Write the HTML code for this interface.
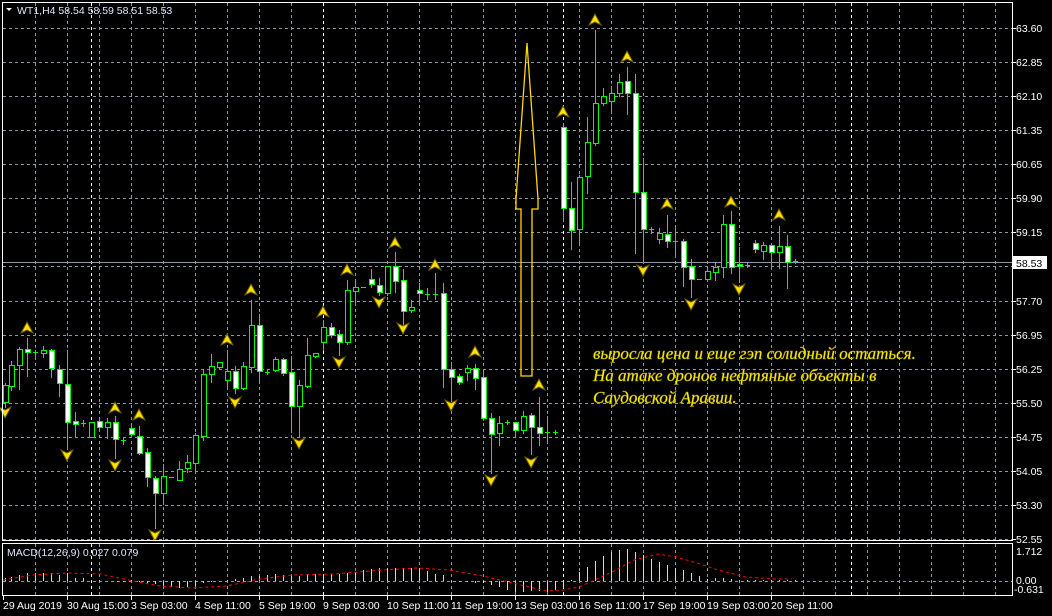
<!DOCTYPE html>
<html><head><meta charset="utf-8"><style>
html,body{margin:0;padding:0;background:#000;width:1052px;height:616px;overflow:hidden}
svg{display:block}
text{font-family:"Liberation Sans","DejaVu Sans",sans-serif;font-size:10.5px;fill:#fff}
.it{font-family:"Liberation Serif",serif;font-style:italic;font-size:17px;fill:#ffff00;stroke:#b8a000;stroke-width:0.5}
</style></head><body>
<svg id="s" width="1052" height="616" xmlns="http://www.w3.org/2000/svg">
<g id="grid"></g>
<line x1="2" y1="262.5" x2="1012" y2="262.5" stroke="#8c9aab" stroke-width="1"/>
<g id="cand"></g>
<polygon points="527,43 516,199 516,209 521,209 521,376 532,376 532,209 538,209 538,199" fill="none" stroke="#ffd800" stroke-width="1.3"/>
<g id="arr"></g>
<g id="macd"></g>
<polyline id="sig" fill="none" stroke="#ff0000" stroke-width="1" stroke-dasharray="3,3" points="3,580 33,575 67,573 100,574 133,581 160,586 193,588 227,586 260,579 293,575 333,574 383,570 417,568 450,570 483,576 500,580 546,591 563,590 579,587 595,580 616,570 634,560 658,554 676,557 697,563 718,570 746,577 775,579 792,579"/>
<rect x="2.5" y="2.5" width="1010" height="538" fill="none" stroke="#fff"/>
<rect x="2.5" y="543.5" width="1010" height="52" fill="none" stroke="#fff"/>
<polygon points="6,8 12,8 9,11" fill="#fff"/>
<text x="17" y="14" style="fill:#e0e8ff">WT1,H4  58.54 58.59 58.51 58.53</text>
<text x="7" y="556" style="fill:#e0e8ff">MACD(12,26,9) 0.027 0.079</text>
<g id="rl">
<text x="1016" y="32">63.60</text>
<text x="1016" y="66">62.85</text>
<text x="1016" y="100">62.10</text>
<text x="1016" y="134">61.35</text>
<text x="1016" y="168">60.65</text>
<text x="1016" y="202">59.90</text>
<text x="1016" y="236">59.15</text>
<text x="1016" y="305">57.70</text>
<text x="1016" y="339">56.95</text>
<text x="1016" y="373">56.25</text>
<text x="1016" y="407">55.50</text>
<text x="1016" y="441">54.75</text>
<text x="1016" y="475">54.05</text>
<text x="1016" y="509">53.30</text>
<text x="1016" y="543">52.55</text>
<text x="1016" y="555">1.712</text>
<text x="1016" y="584">0.00</text>
<text x="1014" y="593">-0.631</text>
</g>
<rect x="1013" y="256" width="34" height="13" fill="#fff"/>
<text x="1016" y="267" style="fill:#000">58.53</text>
<g id="bl">
<text x="3" y="609">29 Aug 2019</text>
<text x="67" y="609">30 Aug 15:00</text>
<text x="131" y="609">3 Sep 03:00</text>
<text x="195" y="609">4 Sep 11:00</text>
<text x="259" y="609">5 Sep 19:00</text>
<text x="323" y="609">9 Sep 03:00</text>
<text x="387" y="609">10 Sep 11:00</text>
<text x="451" y="609">11 Sep 19:00</text>
<text x="515" y="609">13 Sep 03:00</text>
<text x="579" y="609">16 Sep 11:00</text>
<text x="643" y="609">17 Sep 19:00</text>
<text x="707" y="609">19 Sep 03:00</text>
<text x="771" y="609">20 Sep 11:00</text>
</g>
<text class="it" x="593" y="359">выросла цена и еще гэп солидный остаться.</text>
<text class="it" x="593" y="381">На атаке дронов нефтяные объекты в</text>
<text class="it" x="593" y="403">Саудовской Аравии.</text>
</svg>
<script>
var NS="http://www.w3.org/2000/svg";
function el(p,n,a){var e=document.createElementNS(NS,n);for(var k in a)e.setAttribute(k,a[k]);p.appendChild(e);return e;}
var g=document.getElementById('grid');
for(var i=0;i<16;i++){var y=Math.round(28+34.07*i)+0.5;el(g,'line',{x1:3,y1:y,x2:1012,y2:y,stroke:'#8c9aab','stroke-dasharray':'3,3'});}
el(g,'line',{x1:3,y1:581.5,x2:1012,y2:581.5,stroke:'#8c9aab','stroke-dasharray':'3,3'});
for(var x=35;x<1012;x+=32){el(g,'line',{x1:x+.5,y1:3,x2:x+.5,y2:540,stroke:'#8c9aab','stroke-dasharray':'3,3'});el(g,'line',{x1:x+.5,y1:544,x2:x+.5,y2:595,stroke:'#8c9aab','stroke-dasharray':'3,3'});}
[91,323,563,851].forEach(function(x){el(g,'line',{x1:x+.5,y1:3,x2:x+.5,y2:540,stroke:'#fff','stroke-dasharray':'3,3'});el(g,'line',{x1:x+.5,y1:544,x2:x+.5,y2:595,stroke:'#fff','stroke-dasharray':'3,3'});});
for(var i=0;i<16;i++){var y=Math.round(28+34.07*i)+0.5;el(g,'line',{x1:1012,y1:y,x2:1016,y2:y,stroke:'#fff'});}
[3,67,131,195,259,323,387,451,515,579,643,707,771].forEach(function(x){el(g,'line',{x1:x+.5,y1:596,x2:x+.5,y2:600,stroke:'#fff'});});
var C=[[383,407,385,402,'b'],[361,390,365,386,'b'],[347,389,349,365,'b'],[338,376,349,352,'w'],[350,358,352,352,'d'],[346,357,350,353,'b'],[349,377,350,368,'w'],[365,396,369,383,'w'],[350,448,384,422,'w'],[412,437,421,424,'w'],[420,426,423,423,'d'],[422,437,422,437,'b'],[417,431,421,427,'w'],[418,438,422,427,'b'],[416,458,422,439,'w'],[437,444,440,440,'d'],[426,437,428,434,'w'],[426,454,436,453,'w'],[448,486,452,477,'w'],[476,528,478,493,'w'],[464,504,476,493,'b'],[477,477,477,477,'d'],[461,480,469,480,'b'],[455,472,462,468,'b'],[433,472,435,463,'b'],[370,440,374,436,'b'],[354,382,366,374,'b'],[362,368,362,367,'b'],[350,388,371,380,'b'],[366,393,371,388,'w'],[362,389,366,388,'b'],[300,372,325,367,'b'],[314,383,325,371,'w'],[370,374,372,372,'d'],[357,371,359,370,'b'],[358,375,359,373,'w'],[356,432,372,406,'w'],[380,437,385,406,'b'],[338,387,355,386,'b'],[353,357,353,356,'b'],[320,350,327,342,'b'],[323,337,327,335,'w'],[330,355,334,342,'w'],[280,344,290,342,'b'],[282,304,287,291,'b'],[287,287,287,287,'d'],[269,287,279,284,'w'],[278,295,285,292,'w'],[266,295,266,293,'b'],[252,292,266,281,'w'],[269,325,280,311,'w'],[300,312,307,310,'b'],[283,303,290,293,'w'],[288,299,294,294,'d'],[273,299,294,294,'d'],[283,387,293,369,'w'],[362,400,369,377,'w'],[374,384,376,382,'w'],[365,380,368,372,'b'],[364,389,368,378,'w'],[370,420,377,418,'w'],[413,473,418,434,'w'],[416,445,423,433,'b'],[420,424,422,422,'d'],[422,437,422,430,'w'],[411,433,416,430,'b'],[413,454,415,427,'w'],[397,445,427,433,'w'],[416,441,432,432,'d'],[430,434,432,432,'d'],[123,221,127,208,'w'],[182,249,208,230,'w'],[175,245,177,229,'b'],[117,193,142,176,'b'],[30,145,103,143,'b'],[88,105,96,103,'b'],[86,113,93,101,'b'],[74,96,82,93,'b'],[67,114,81,93,'w'],[74,253,93,192,'w'],[158,260,192,229,'w'],[227,233,229,229,'d'],[228,243,233,239,'b'],[215,247,234,241,'w'],[228,257,241,241,'d'],[239,286,241,267,'w'],[259,297,266,279,'w'],[279,279,279,279,'d'],[267,280,271,279,'b'],[263,280,267,272,'b'],[215,277,224,267,'b'],[211,273,224,267,'w'],[247,282,264,266,'w'],[263,267,265,265,'d'],[240,252,243,249,'w'],[242,259,245,251,'b'],[245,268,245,252,'w'],[226,268,246,252,'b'],[235,288,246,262,'w'],[259,263,261,261,'d']];
var cg=document.getElementById('cand');
C.forEach(function(c,k){var x=3+8*k;if(x<4)x=5;
 el(cg,'line',{x1:x+.5,y1:c[0],x2:x+.5,y2:c[1]+1,stroke:'#00ff00'});
 if(c[4]=='d'){el(cg,'line',{x1:x-2,y1:c[2]+.5,x2:x+3,y2:c[2]+.5,stroke:'#00ff00'});}
 else el(cg,'rect',{x:x-2+.5,y:c[2]+.5,width:5,height:Math.max(2,c[3]-c[2]),fill:c[4]=='w'?'#fff':'#000',stroke:'#00ff00'});
});
var ag=document.getElementById('arr');
function up(x,y){el(ag,'polygon',{points:(x)+','+(y-6)+' '+(x+6)+','+(y+5)+' '+x+','+(y+2)+' '+(x-6)+','+(y+5),fill:'#ffe000',stroke:'#6b5a00','stroke-width':1});}
function dn(x,y){el(ag,'polygon',{points:(x)+','+(y+6)+' '+(x+6)+','+(y-5)+' '+x+','+(y-2)+' '+(x-6)+','+(y-5),fill:'#ffe000',stroke:'#6b5a00','stroke-width':1});}
[[27,328],[115,408],[139,415],[227,340],[251,290],[323,312],[347,270],[395,243],[435,265],[475,352],[539,385],[563,112],[595,20],[627,57],[667,204],[731,202],[779,215]].forEach(function(a){up(a[0],a[1]);});
[[5,412],[67,455],[115,465],[155,535],[235,402],[299,443],[339,362],[379,302],[403,328],[451,405],[491,480],[531,462],[643,270],[691,304],[739,289]].forEach(function(a){dn(a[0],a[1]);});
var H=[578,577,575,573,573,573,573,575,573,578,578,580,580,581,581,582,580,582,583,584,586,587,588,587,586,583,582,581,580,579,578,576,576,575,574,575,576,576,574,574,574,574,574,573,572,570,569,568,568,568,568,568,568,571,574,575,582,582,582,583,583,585,587,590,592,592,591,591,592,590,588,580,572,567,561,556,552,550,549,552,555,559,562,565,568,570,573,576,579,578,578,579,580,580,580,580,580,580,580,580];
var mg=document.getElementById('macd');
H.forEach(function(v,k){var x=3+8*k;if(x<4)x=5;el(mg,'line',{x1:x+.5,y1:Math.min(v,581),x2:x+.5,y2:Math.max(v,581),stroke:'#d8d8d8'});});
</script>
</body></html>
